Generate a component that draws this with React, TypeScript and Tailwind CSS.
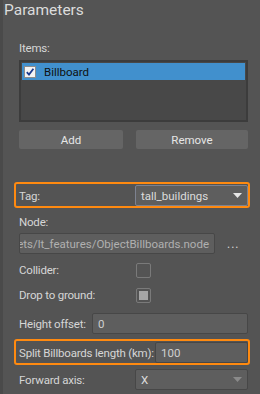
import React from 'react';

const font = { fontFamily: 'Roboto, "Liberation Sans", sans-serif' };

function Caret({ dim }: { dim?: boolean }) {
  return (
    <svg width="9" height="5" viewBox="0 0 9 5" className="shrink-0">
      <path d="M0 0 L9 0 L4.5 5 Z" fill={dim ? '#8a8a8a' : '#e6e6e6'} />
    </svg>
  );
}

function Dropdown({ value, active }: { value: string; active?: boolean }) {
  return (
    <div
      className={`flex-1 h-[21px] flex items-center justify-between pl-[5px] pr-[5px] rounded-[2px] bg-[#5e5e5e] border ${
        active ? 'border-[#7d8290]' : 'border-[#474747]'
      }`}
    >
      <span className="text-[11.5px] leading-[16px] text-[#dcdcdc]">{value}</span>
      <Caret dim={!active} />
    </div>
  );
}

function TextBox({ value, className = '' }: { value: string; className?: string }) {
  return (
    <div className={`h-[21px] flex items-center px-[5px] rounded-[2px] bg-[#5e5e5e] border border-[#474747] text-[11.5px] leading-[16px] text-[#d0d0d0] ${className}`}>
      {value}
    </div>
  );
}

function Check({ checked }: { checked?: boolean }) {
  return (
    <div className="w-[15px] h-[15px] rounded-[2px] border border-[#7a7a7a] flex items-center justify-center">
      {checked && <div className="w-[9px] h-[9px] bg-[#a6a6a6]" />}
    </div>
  );
}

function Highlight() {
  return <div className="absolute -left-[5px] -right-[2px] -top-[3px] -bottom-[2px] border-2 border-[#ff8a10] rounded-[3px] pointer-events-none" />;
}

const label = 'text-[11.5px] leading-[16px] tracking-[-0.2px] whitespace-nowrap shrink-0';

export default function App() {
  return (
    <div style={font} className="w-[260px] h-[394px] bg-[#545454] border-l-[3px] border-[#4a4a4a] overflow-hidden text-[#d6d6d6]">
      <div className="pl-[1px] text-[15.5px] leading-[21px] text-[#dcdcdc]">Parameters</div>

      <div className="pl-[16px] pr-[12px]">
        <div className={`mt-[19px] ${label}`}>Items:</div>

        <div className="mt-[4px] h-[62px] bg-[#484848] border-2 border-[#3c3c3c] p-[1px]">
          <div className="h-[17px] bg-[#4190cd] flex items-center pl-[2px]">
            <div className="w-[12px] h-[12px] bg-[#f4f4f4] border border-[#8c8c8c] flex items-center justify-center">
              <svg width="10" height="10" viewBox="0 0 10 10">
                <path d="M1.8 5.2 L4 7.6 L8.4 1.8" stroke="#1c3a8c" strokeWidth="1.8" fill="none" />
              </svg>
            </div>
            <span className="ml-[8px] text-[11.5px] leading-[16px] text-[#101010]">Billboard</span>
          </div>
        </div>

        <div className="mt-[8px] flex gap-[13px]">
          <button className="w-[104px] h-[19px] bg-[#656565] rounded-[2px] text-[11.5px] leading-[16px] text-[#e6e6e6]">Add</button>
          <button className="flex-1 h-[19px] bg-[#656565] rounded-[2px] text-[11.5px] leading-[16px] text-[#e6e6e6]">Remove</button>
        </div>

        <div className="relative mt-[36px] flex items-center">
          <Highlight />
          <span className={`w-[116px] ${label}`}>Tag:</span>
          <Dropdown value="tall_buildings" active />
        </div>

        <div className={`mt-[8px] ${label}`}>Node:</div>
        <div className="mt-[3px] flex items-center">
          <div className="w-[196px] h-[21px] flex items-center justify-end overflow-hidden whitespace-nowrap pr-[5px] rounded-[2px] bg-[#5e5e5e] border border-[#474747] text-[11.5px] leading-[16px] text-[#b0b0b0]">
            Assets/lt_features/ObjectBillboards.node
          </div>
          <span className="ml-[12px] text-[12px] leading-[12px] tracking-[1px]">...</span>
        </div>

        <div className="mt-[4px] h-[24px] flex items-center">
          <span className={`w-[117px] ${label}`}>Collider:</span>
          <Check />
        </div>
        <div className="mt-[1px] h-[24px] flex items-center">
          <span className={`w-[117px] ${label}`}>Drop to ground:</span>
          <Check checked />
        </div>

        <div className="mt-[6px] flex items-center">
          <span className={`w-[73px] ${label}`}>Height offset:</span>
          <TextBox value="0" className="flex-1" />
        </div>

        <div className="relative mt-[8px] flex items-center">
          <Highlight />
          <span className={`w-[136px] ${label}`}>Split Billboards length (km):</span>
          <TextBox value="100" className="flex-1" />
        </div>

        <div className="mt-[6px] flex items-center">
          <span className={`w-[116px] ${label}`}>Forward axis:</span>
          <Dropdown value="X" />
        </div>
      </div>
    </div>
  );
}
